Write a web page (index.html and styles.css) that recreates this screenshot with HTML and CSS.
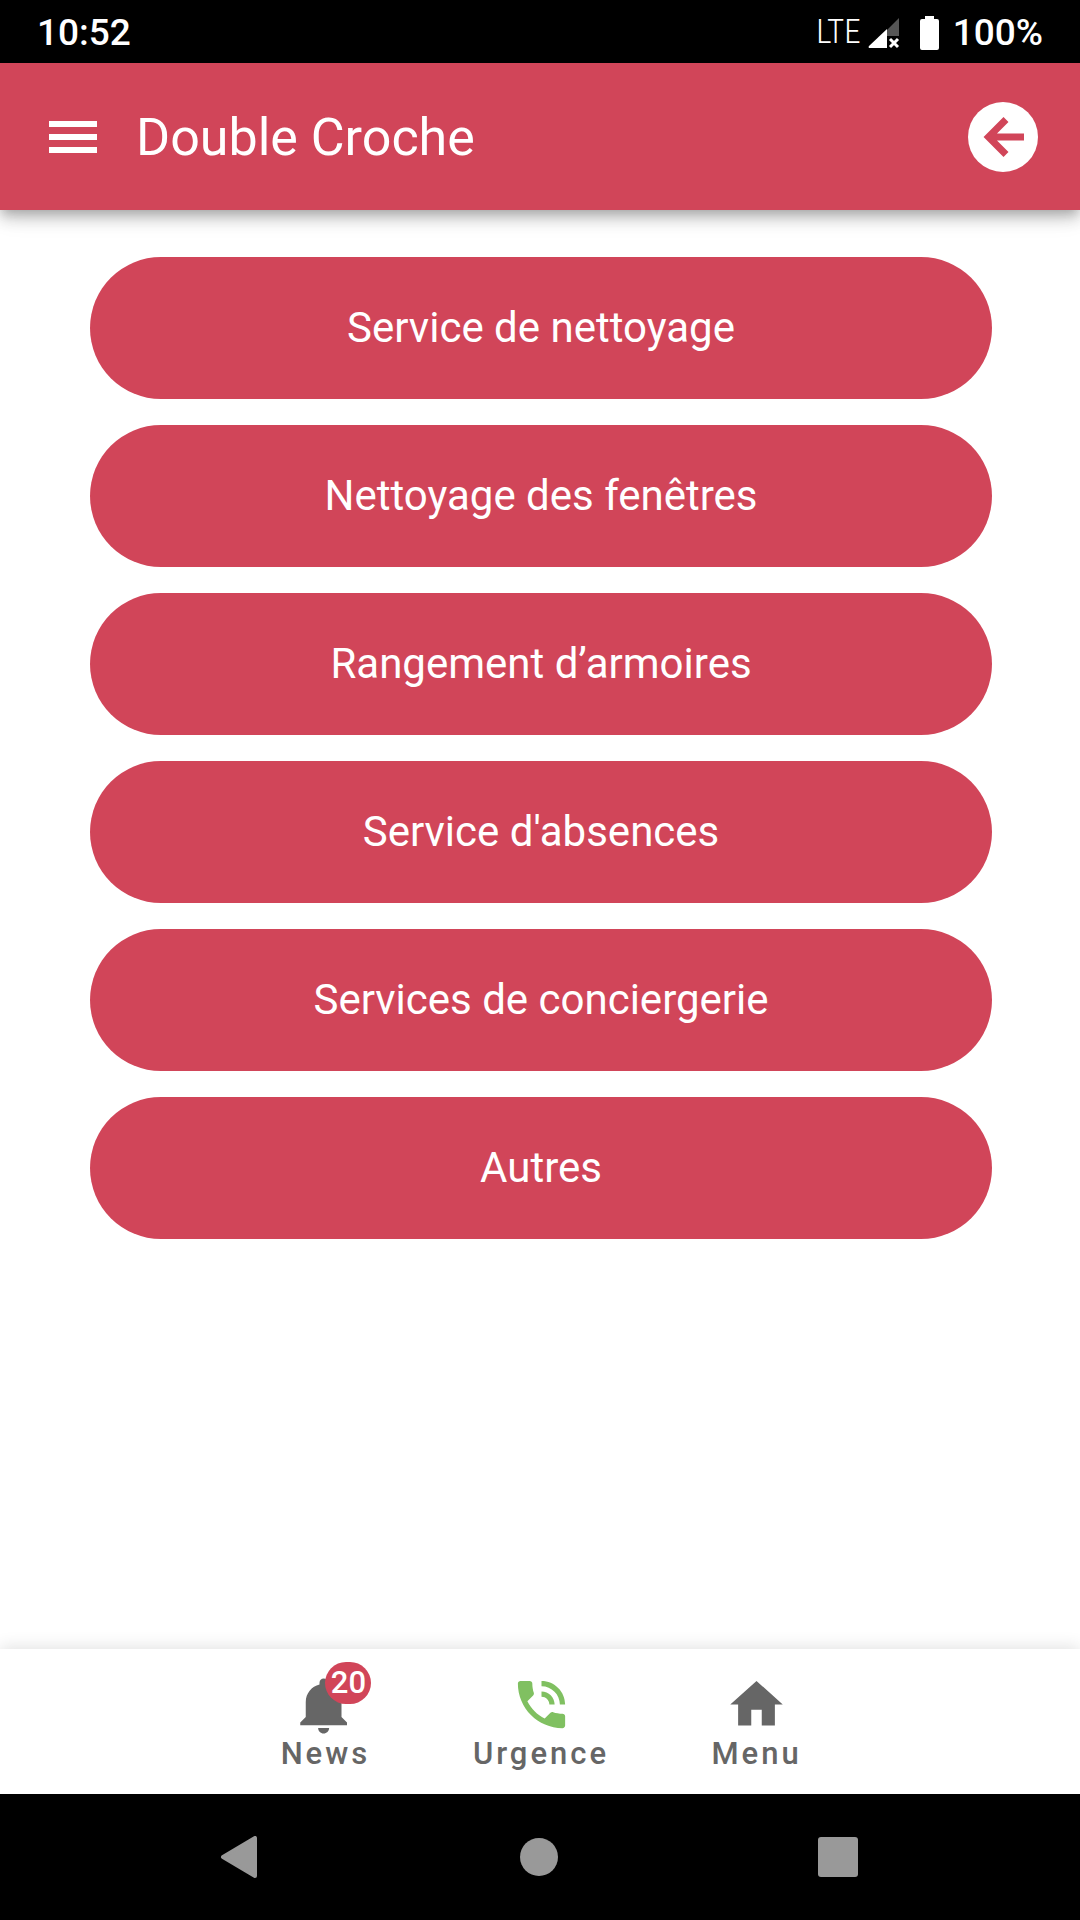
FILE: index.html
```html
<!DOCTYPE html>
<html lang="fr">
<head>
	<meta charset="UTF-8">
	<meta name="viewport" content="width=device-width, initial-scale=1">
	<title>Double Croche</title>
	<link rel="stylesheet" href="styles.css">
</head>
<body>
	<div class="status">
		<span class="time">10:52</span>
		<div class="status-right">
			<span class="lte">LTE</span>
			<svg class="signal" viewBox="0 0 32 32">
				<path d="M31 1v18H19V13z" fill="#555"/>
				<path d="M19 12v19H1q-1-1 0-2z" fill="#fff"/>
				<path d="M22 22l8 8M30 22l-8 8" stroke="#fff" stroke-width="3"/>
			</svg>
			<svg class="battery" viewBox="0 0 19 34">
				<path d="M5 0h9v3h3q2 0 2 2v27q0 2-2 2H2q-2 0-2-2V5q0-2 2-2h3z" fill="#fff"/>
			</svg>
			<span class="percent">100%</span>
		</div>
	</div>

	<header class="header">
		<button class="icon-btn" aria-label="Ouvrir le menu">
			<svg class="burger" viewBox="0 0 48 32"><path d="M0 0h48v6H0zM0 13h48v6H0zM0 26h48v6H0z" fill="#fff"/></svg>
		</button>
		<h1>Double Croche</h1>
		<button class="icon-btn" aria-label="Retour">
			<svg class="back" viewBox="0 0 70 70">
				<circle cx="35" cy="35" r="35" fill="#fff"/>
				<path d="M56 35H20M38 17.500L20.500 35 38 52.500" fill="none" stroke="#d14559" stroke-width="7"/>
			</svg>
		</button>
	</header>

	<main class="list">
		<button>Service de nettoyage</button>
		<button>Nettoyage des fenêtres</button>
		<button>Rangement d’armoires</button>
		<button>Service d'absences</button>
		<button>Services de conciergerie</button>
		<button>Autres</button>
	</main>

	<nav class="tabs">
		<a href="#news">
			<span class="tab-icon">
				<svg class="bell" viewBox="0 0 24 24"><path d="M11.500 22c1.100 0 2-.9 2-2h-4c0 1.100.9 2 2 2zm6.500-6v-5.500c0-3.070-2.130-5.640-5-6.320V3.500c0-.83-.67-1.500-1.500-1.500S10 2.670 10 3.500v.68c-2.870.68-5 3.250-5 6.320V16l-2 2v1h17v-1l-2-2z"/></svg>
				<span class="badge">20</span>
			</span>
			News
		</a>
		<a href="#urgence">
			<span class="tab-icon">
				<svg class="green" viewBox="0 0 24 24"><path d="M19 12h2c0-4.970-4.030-9-9-9v2c3.870 0 7 3.130 7 7zm-4 0h2c0-2.760-2.240-5-5-5v2c1.660 0 3 1.340 3 3zm5 3.500c-1.250 0-2.450-.2-3.570-.57-.35-.11-.74-.03-1.020.24l-2.200 2.200c-2.830-1.440-5.150-3.750-6.590-6.590l2.200-2.210c.28-.26.36-.65.25-1C8.700 6.450 8.500 5.250 8.500 4c0-.55-.45-1-1-1H4c-.55 0-1 .45-1 1 0 9.390 7.610 17 17 17 .55 0 1-.45 1-1v-3.500c0-.55-.45-1-1-1z"/></svg>
			</span>
			Urgence
		</a>
		<a href="#menu">
			<span class="tab-icon">
				<svg viewBox="0 0 24 24"><path d="M10 20v-6h4v6h5v-8h3L12 3 2 12h3v8z"/></svg>
			</span>
			Menu
		</a>
	</nav>

	<div class="sysnav">
		<button aria-label="Précédent"><svg viewBox="0 0 42 42"><path d="M36 2v38L4 21z"/></svg></button>
		<button aria-label="Accueil"><svg viewBox="0 0 42 42"><circle cx="21" cy="21" r="19"/></svg></button>
		<button aria-label="Applications récentes"><svg viewBox="0 0 42 42"><rect x="1" y="1" width="40" height="40" rx="3"/></svg></button>
	</div>
</body>
</html>
```

FILE: styles.css
```css
*{ margin: 0; padding: 0; box-sizing: border-box; }
body{ min-height: 100vh; display: flex; flex-direction: column; background: #fff; font-family: Roboto, sans-serif; }
button{ border: none; background: none; font-family: inherit; cursor: pointer; }
svg{ display: block; }

/* Android status bar */
.status{ height: 63px; padding: 2px 37px 0; display: flex; align-items: center; justify-content: space-between; background: #000; color: #fff; font-size: 37px; font-weight: 500; line-height: 44px; z-index: 2; }
.status-right{ display: flex; align-items: center; }
.lte{ padding-bottom: 2px; font-family: "Roboto Condensed", Roboto, sans-serif; font-size: 33px; font-weight: 300; }
.signal{ width: 32px; height: 32px; margin-left: 7px; }
.battery{ width: 19px; height: 34px; margin: 0 14px 0 20px; }

.header{ height: 147px; padding: 0 42px 0 49px; display: flex; align-items: center; background: #d14559; color: #fff; box-shadow: 0 5px 10px -3px rgba(0,0,0,0.2), 0 10px 13px rgba(0,0,0,0.14), 0 3px 26px rgba(0,0,0,0.12); z-index: 1; }
.header h1{ flex: 1; padding: 2px 0 0 39px; font-size: 52px; font-weight: 400; line-height: 64px; }
.burger{ width: 48px; height: 32px; }
.back{ width: 70px; height: 70px; }

.list{ flex: 1; padding: 47px 88px 26px 90px; display: flex; flex-direction: column; gap: 26px; }
.list button{ height: 142px; border-radius: 71px; background: #d14559; color: #fff; font-size: 42px; line-height: 48px; }

/* bottom tabs */
.tabs{ height: 145px; padding: 24px 0 0 2px; display: flex; justify-content: center; background: #fff; box-shadow: 0 -2px 16px rgba(0,0,0,0.12); }
.tabs a{ width: 20%; display: flex; flex-direction: column; align-items: center; color: #666; font-size: 31px; font-weight: 500; line-height: 36px; letter-spacing: 3px; text-decoration: none; }
.tab-icon{ height: 63px; position: relative; }
.tab-icon svg{ width: 63px; height: 63px; fill: #666; }
.tab-icon .bell{ width: 66px; height: 66px; }
.tab-icon .green{ fill: #80c061; }
.badge{ position: absolute; top: -11px; right: -13px; width: 46px; height: 42px; border-radius: 21px; background: #d14559; color: #fff; font-size: 31px; line-height: 42px; letter-spacing: 0; text-align: center; }

.sysnav{ height: 126px; padding-right: 2px; display: flex; align-items: center; justify-content: center; gap: 257px; background: #000; z-index: 1; }
.sysnav svg{ width: 42px; height: 42px; fill: #999; stroke: #999; stroke-linejoin: round; }
.sysnav path{ stroke-width: 4px; }
.sysnav circle, .sysnav rect{ stroke: none; }
```
